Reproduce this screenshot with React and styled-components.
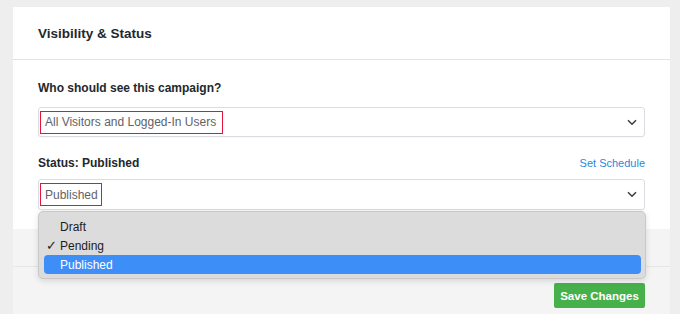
import React from "react";
import styled, { createGlobalStyle } from "styled-components";

const Global = createGlobalStyle`
  html, body { margin: 0; padding: 0; background: #eeeeee; }
  body { font-family: "Liberation Sans", Arial, sans-serif; -webkit-font-smoothing: antialiased; }
  * { box-sizing: border-box; }
`;

const Page = styled.div`
  width: 680px;
  height: 314px;
  overflow: hidden;
  padding: 7px 10px 0 13px;
`;

const Card = styled.div`
  width: 657px;
  background: #f4f4f4;
`;

const Header = styled.div`
  height: 53px;
  background: #fff;
  border-bottom: 1px solid #e3e3e3;
  display: flex;
  align-items: center;
  padding: 0 25px;
`;

const Title = styled.h2`
  margin: 0;
  font-size: 13.5px;
  font-weight: 700;
  color: #23282d;
`;

const Body = styled.div`
  background: #fff;
  padding: 20px 25px 19px;
  display: flex;
  flex-direction: column;
`;

const Row = styled.div`
  display: flex;
  justify-content: space-between;
  align-items: center;
  height: 16px;
  margin-top: ${(p) => p.$top || 0}px;
  margin-bottom: ${(p) => p.$bottom || 0}px;
`;

const Label = styled.span`
  font-size: 12px;
  font-weight: 700;
  color: #23282d;
`;

const Link = styled.a`
  font-size: 11px;
  color: #2b86dd;
  text-decoration: none;
`;

const SelectWrap = styled.div`
  position: relative;
`;

const Select = styled.div`
  height: ${(p) => p.$h}px;
  border: 1px solid #dadde1;
  border-radius: 3px;
  background: #fff;
  display: flex;
  align-items: center;
  justify-content: space-between;
  padding: 0 7px 0 1px;
  box-shadow: 0 1px 1px rgba(0, 0, 0, 0.03);
`;

const Value = styled.span`
  font-size: 12px;
  color: #5f6368;
  border: 1px solid #e3163a;
  height: 23px;
  display: flex;
  align-items: center;
  padding: 0 ${(p) => p.$pr}px 0 4px;
`;

const Chevron = () => (
  <svg width="10" height="7" viewBox="0 0 10 7">
    <path d="M1 1.2l4 4 4-4" fill="none" stroke="#3c3c3c" strokeWidth="1.5" />
  </svg>
);

const Menu = styled.ul`
  position: absolute;
  top: 32px;
  left: 0;
  width: 608px;
  margin: 0;
  padding: 5px 4px 4px 5px;
  list-style: none;
  background: #dcdcdc;
  border: 1px solid #c9c9c9;
  border-radius: 5px;
  box-shadow: 0 2px 6px rgba(0, 0, 0, 0.12);
  z-index: 2;
`;

const Item = styled.li`
  height: 19px;
  display: flex;
  align-items: center;
  position: relative;
  padding-left: 16px;
  font-size: 12px;
  border-radius: 4px;
  color: ${(p) => (p.$active ? "#fff" : "#1d1d1d")};
  background: ${(p) => (p.$active ? "#3e8ef8" : "transparent")};
`;

const Check = styled.span`
  position: absolute;
  left: 2px;
  top: 2px;
  font-size: 13px;
`;

const Strip = styled.div`
  height: 38px;
  background: #f4f4f4;
  border-bottom: 1px solid #e6e6e6;
`;

const Actions = styled.div`
  display: flex;
  justify-content: flex-end;
  padding: 16px 25px 10px;
  background: #f4f4f4;
`;

const Button = styled.button`
  height: 25px;
  width: 91px;
  border: none;
  border-radius: 2px;
  background: #46b04a;
  color: #fff;
  font-family: inherit;
  font-size: 11.5px;
  font-weight: 700;
  padding: 0;
`;

export default function App() {
  return (
    <>
      <Global />
      <Page>
        <Card>
          <Header>
            <Title>Visibility &amp; Status</Title>
          </Header>
          <Body>
            <Row $bottom={11}>
              <Label>Who should see this campaign?</Label>
            </Row>
            <Select $h={30}>
              <Value $pr={6}>All Visitors and Logged-In Users</Value>
              <Chevron />
            </Select>
            <Row $top={18} $bottom={8}>
              <Label>Status: Published</Label>
              <Link href="#">Set Schedule</Link>
            </Row>
            <SelectWrap>
              <Select $h={31}>
                <Value $pr={3}>Published</Value>
                <Chevron />
              </Select>
              <Menu>
                <Item>Draft</Item>
                <Item>
                  <Check>✓</Check>Pending
                </Item>
                <Item $active>Published</Item>
              </Menu>
            </SelectWrap>
          </Body>
          <Strip />
          <Actions>
            <Button>Save Changes</Button>
          </Actions>
        </Card>
      </Page>
    </>
  );
}
